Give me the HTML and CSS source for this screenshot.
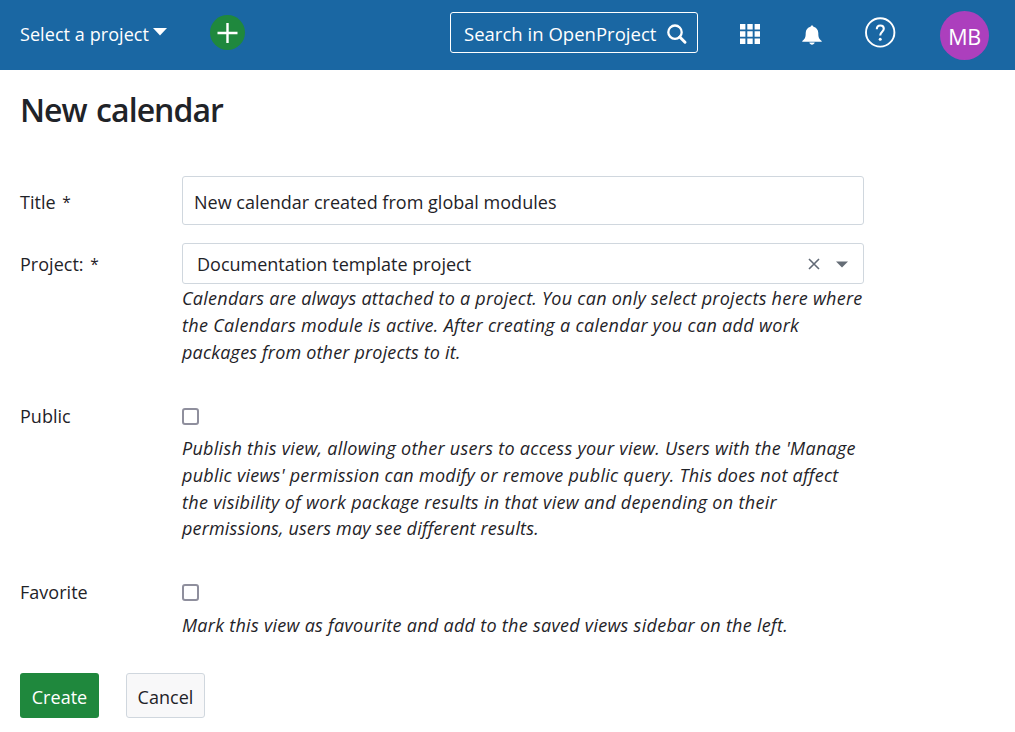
FILE: index.html
```html
<!DOCTYPE html>
<html lang="en">
<head>
<meta charset="utf-8">
<title>New calendar</title>
<link rel="stylesheet" href="styles.css">
</head>
<body>
<header class="topbar">
  <button class="project-select"><span class="t-select">Select a project</span><svg width="14" height="8" viewBox="0 0 14 8"><path d="M0 0h14L7 7.5z" fill="#fff"/></svg></button>
  <button class="add" aria-label="Add"><svg width="35" height="35" viewBox="0 0 35 35"><path d="M17.5 8v20M7.5 18h20" stroke="#fff" stroke-width="2.4"/></svg></button>
  <div class="search"><span class="t-search">Search in OpenProject</span><svg width="21" height="21" viewBox="0 0 21 21" fill="none" stroke="#fff"><circle cx="8" cy="8.2" r="6.7" stroke-width="2.3"/><path d="M12.8 13l5.2 5.2" stroke-width="3" stroke-linecap="round"/></svg></div>
  <svg class="modules" width="20" height="20" viewBox="0 0 20 20" fill="#fff"><path d="M0 0h5.4v5.4H0zM7.3 0h5.4v5.4H7.3zM14.6 0H20v5.4h-5.4zM0 7.3h5.4v5.4H0zM7.3 7.3h5.4v5.4H7.3zM14.6 7.3H20v5.4h-5.4zM0 14.6h5.4V20H0zM7.3 14.6h5.4V20H7.3zM14.6 14.6H20V20h-5.4z"/></svg>
  <svg class="bell" width="20" height="20" viewBox="0 0 20 20" fill="#fff"><path d="M10 .5c.8 0 1.3.5 1.4 1.3 3 .7 4.9 3 4.9 6.2 0 4.5.8 6.200 3.400 8v.8H.3V16c2.600-1.800 3.400-3.500 3.400-8 0-3.200 1.900-5.500 4.900-6.200C8.700 1 9.200.5 10 .5zM7.300 17.600h5.400C12.300 19 11.300 19.700 10 19.700S7.700 19 7.300 17.600z"/></svg>
  <svg class="help" width="32" height="32" viewBox="0 0 32 32" fill="none" stroke="#fff"><circle cx="16.2" cy="15.4" r="14.2" stroke-width="1.9"/><path d="M12.8 12.2c0-2.3 1.3-3.7 3.5-3.7s3.5 1.3 3.5 3.2c0 3-3.6 3-3.6 6.800" stroke-width="2.1"/><circle cx="16.2" cy="22.3" r="1.5" fill="#fff" stroke="none"/></svg>
  <div class="avatar">MB</div>
</header>
<main class="page">
  <h1>New calendar</h1>
  <form>
    <div class="row row-title">
      <label>Title <span class="req">*</span></label>
      <div class="input"><span class="t-input">New calendar created from global modules</span></div>
    </div>
    <div class="row row-project">
      <label>Project: <span class="req">*</span></label>
      <div class="field">
        <div class="select"><span class="t-value">Documentation template project</span>
          <svg class="clear" width="12" height="12" viewBox="0 0 12 12"><path d="M1 1l10 10M11 1L1 11" stroke="#626a76" stroke-width="1.6"/></svg>
          <svg class="caret" width="12" height="7" viewBox="0 0 12 7"><path d="M0 .5h12L6 6.5z" fill="#656d76"/></svg>
        </div>
        <p class="help-text"><span class="a1">Calendars are always attached to a project. You can only select projects here where</span><span class="a2">the Calendars module is active. After creating a calendar you can add work</span><span class="a3">packages from other projects to it.</span></p>
      </div>
    </div>
    <div class="row row-public">
      <label>Public</label>
      <div class="field">
        <span class="checkbox" role="checkbox" aria-checked="false"></span>
        <p class="help-text"><span class="b1">Publish this view, allowing other users to access your view. Users with the 'Manage</span><span class="b2">public views' permission can modify or remove public query. This does not affect</span><span class="b3">the visibility of work package results in that view and depending on their</span><span class="b4">permissions, users may see different results.</span></p>
      </div>
    </div>
    <div class="row row-favorite">
      <label>Favorite</label>
      <div class="field">
        <span class="checkbox" role="checkbox" aria-checked="false"></span>
        <p class="help-text"><span class="c1">Mark this view as favourite and add to the saved views sidebar on the left.</span></p>
      </div>
    </div>
    <div class="actions"><button type="button" class="btn create">Create</button><button type="button" class="btn cancel">Cancel</button></div>
  </form>
</main>
</body>
</html>
```

FILE: styles.css
```css
* { box-sizing: border-box; }
body { margin: 0; background: #fff; color: #1f2328; font: 18px/27px "Open Sans", "Noto Sans", sans-serif; letter-spacing: 0.02px; }
button { font: inherit; letter-spacing: inherit; border: 0; padding: 0; background: none; color: inherit; }
svg { display: block; flex: none; }
.topbar { height: 70px; background: #1a67a3; color: #fff; display: flex; align-items: flex-start; }
.project-select { display: flex; margin: 21px 0 0 20px; width: 190px; white-space: nowrap; }
.project-select svg { margin: 7px 0 0 4px; }
.t-select { width: 129px; text-align: left; letter-spacing: 0.07px; }
.add { width: 35px; height: 35px; margin-top: 15px; border-radius: 50%; background: #1f883d; }
.search { width: 248px; height: 41px; margin: 12px 0 0 205px; padding: 7px 0 0 13px; border: 1px solid #fff; border-radius: 3px; display: flex; white-space: nowrap; }
.t-search { width: 203px; font-size: 18.5px; letter-spacing: 0.02px; }
.search svg { margin-top: 4px; }
.modules { margin: 24px 0 0 42px; }
.bell { margin: 25px 0 0 42px; }
.help { margin: 17px 0 0 42px; }
.avatar { width: 49px; height: 49px; margin: 11px 0 0 44px; border-radius: 50%; background: #ac3fbd; font-size: 21.5px; line-height: 51px; text-align: center; letter-spacing: -0.4px; }
.page { padding: 0 20px; }
h1 { margin: 0; padding-top: 19px; height: 106px; font-size: 32px; line-height: 42px; font-weight: 600; letter-spacing: -0.95px; word-spacing: 2px; }
.row { display: grid; grid-template-columns: 162px 682px; }
.row-title { height: 67px; }
.row-title label { padding-top: 13px; }
.req { margin-left: 2px; font-size: 15.5px; line-height: 1; vertical-align: 1px; }
.input { height: 49px; border: 1px solid #d0d7de; border-radius: 3px; padding: 12px 11px; white-space: nowrap; }
.row-project { height: 160px; }
.row-project label { padding-top: 8px; }
.select { height: 41px; border: 1px solid #d0d7de; border-radius: 3px; padding: 1px 15px 0 14px; display: flex; align-items: center; }
.t-value { letter-spacing: 0; }
.select .clear { margin: 0 16px 0 auto; }
.select .caret { margin-top: 1px; }
.help-text { margin: 0; font-style: italic; line-height: 26.8px; }
.help-text span { display: block; white-space: nowrap; }
.a1 { letter-spacing: 0.25px; }
.a2 { letter-spacing: 0.31px; }
.a3 { letter-spacing: 0.18px; }
.b1 { letter-spacing: 0.28px; }
.b2 { letter-spacing: 0.26px; }
.b3 { letter-spacing: 0.31px; }
.b4 { letter-spacing: 0.17px; }
.c1 { letter-spacing: 0.28px; }
.row-project .help-text { margin-top: 1px; }
.row-public { height: 176px; }
.row-public .field, .row-favorite .field { padding-top: 5px; }
.checkbox { display: block; width: 17px; height: 17px; border: 2px solid #8f8f9d; border-radius: 3px; }
.row-public .help-text { margin-top: 10px; }
.row-favorite .help-text { margin-top: 11px; }
.row-favorite { height: 94px; }
.actions { display: flex; gap: 27px; }
.btn { width: 79px; height: 45px; border-radius: 3px; padding-top: 4px; }
.create { background: #1f883d; color: #fff; }
.cancel { border: 1px solid #d0d7de; background: #f8f8f9; }
```
